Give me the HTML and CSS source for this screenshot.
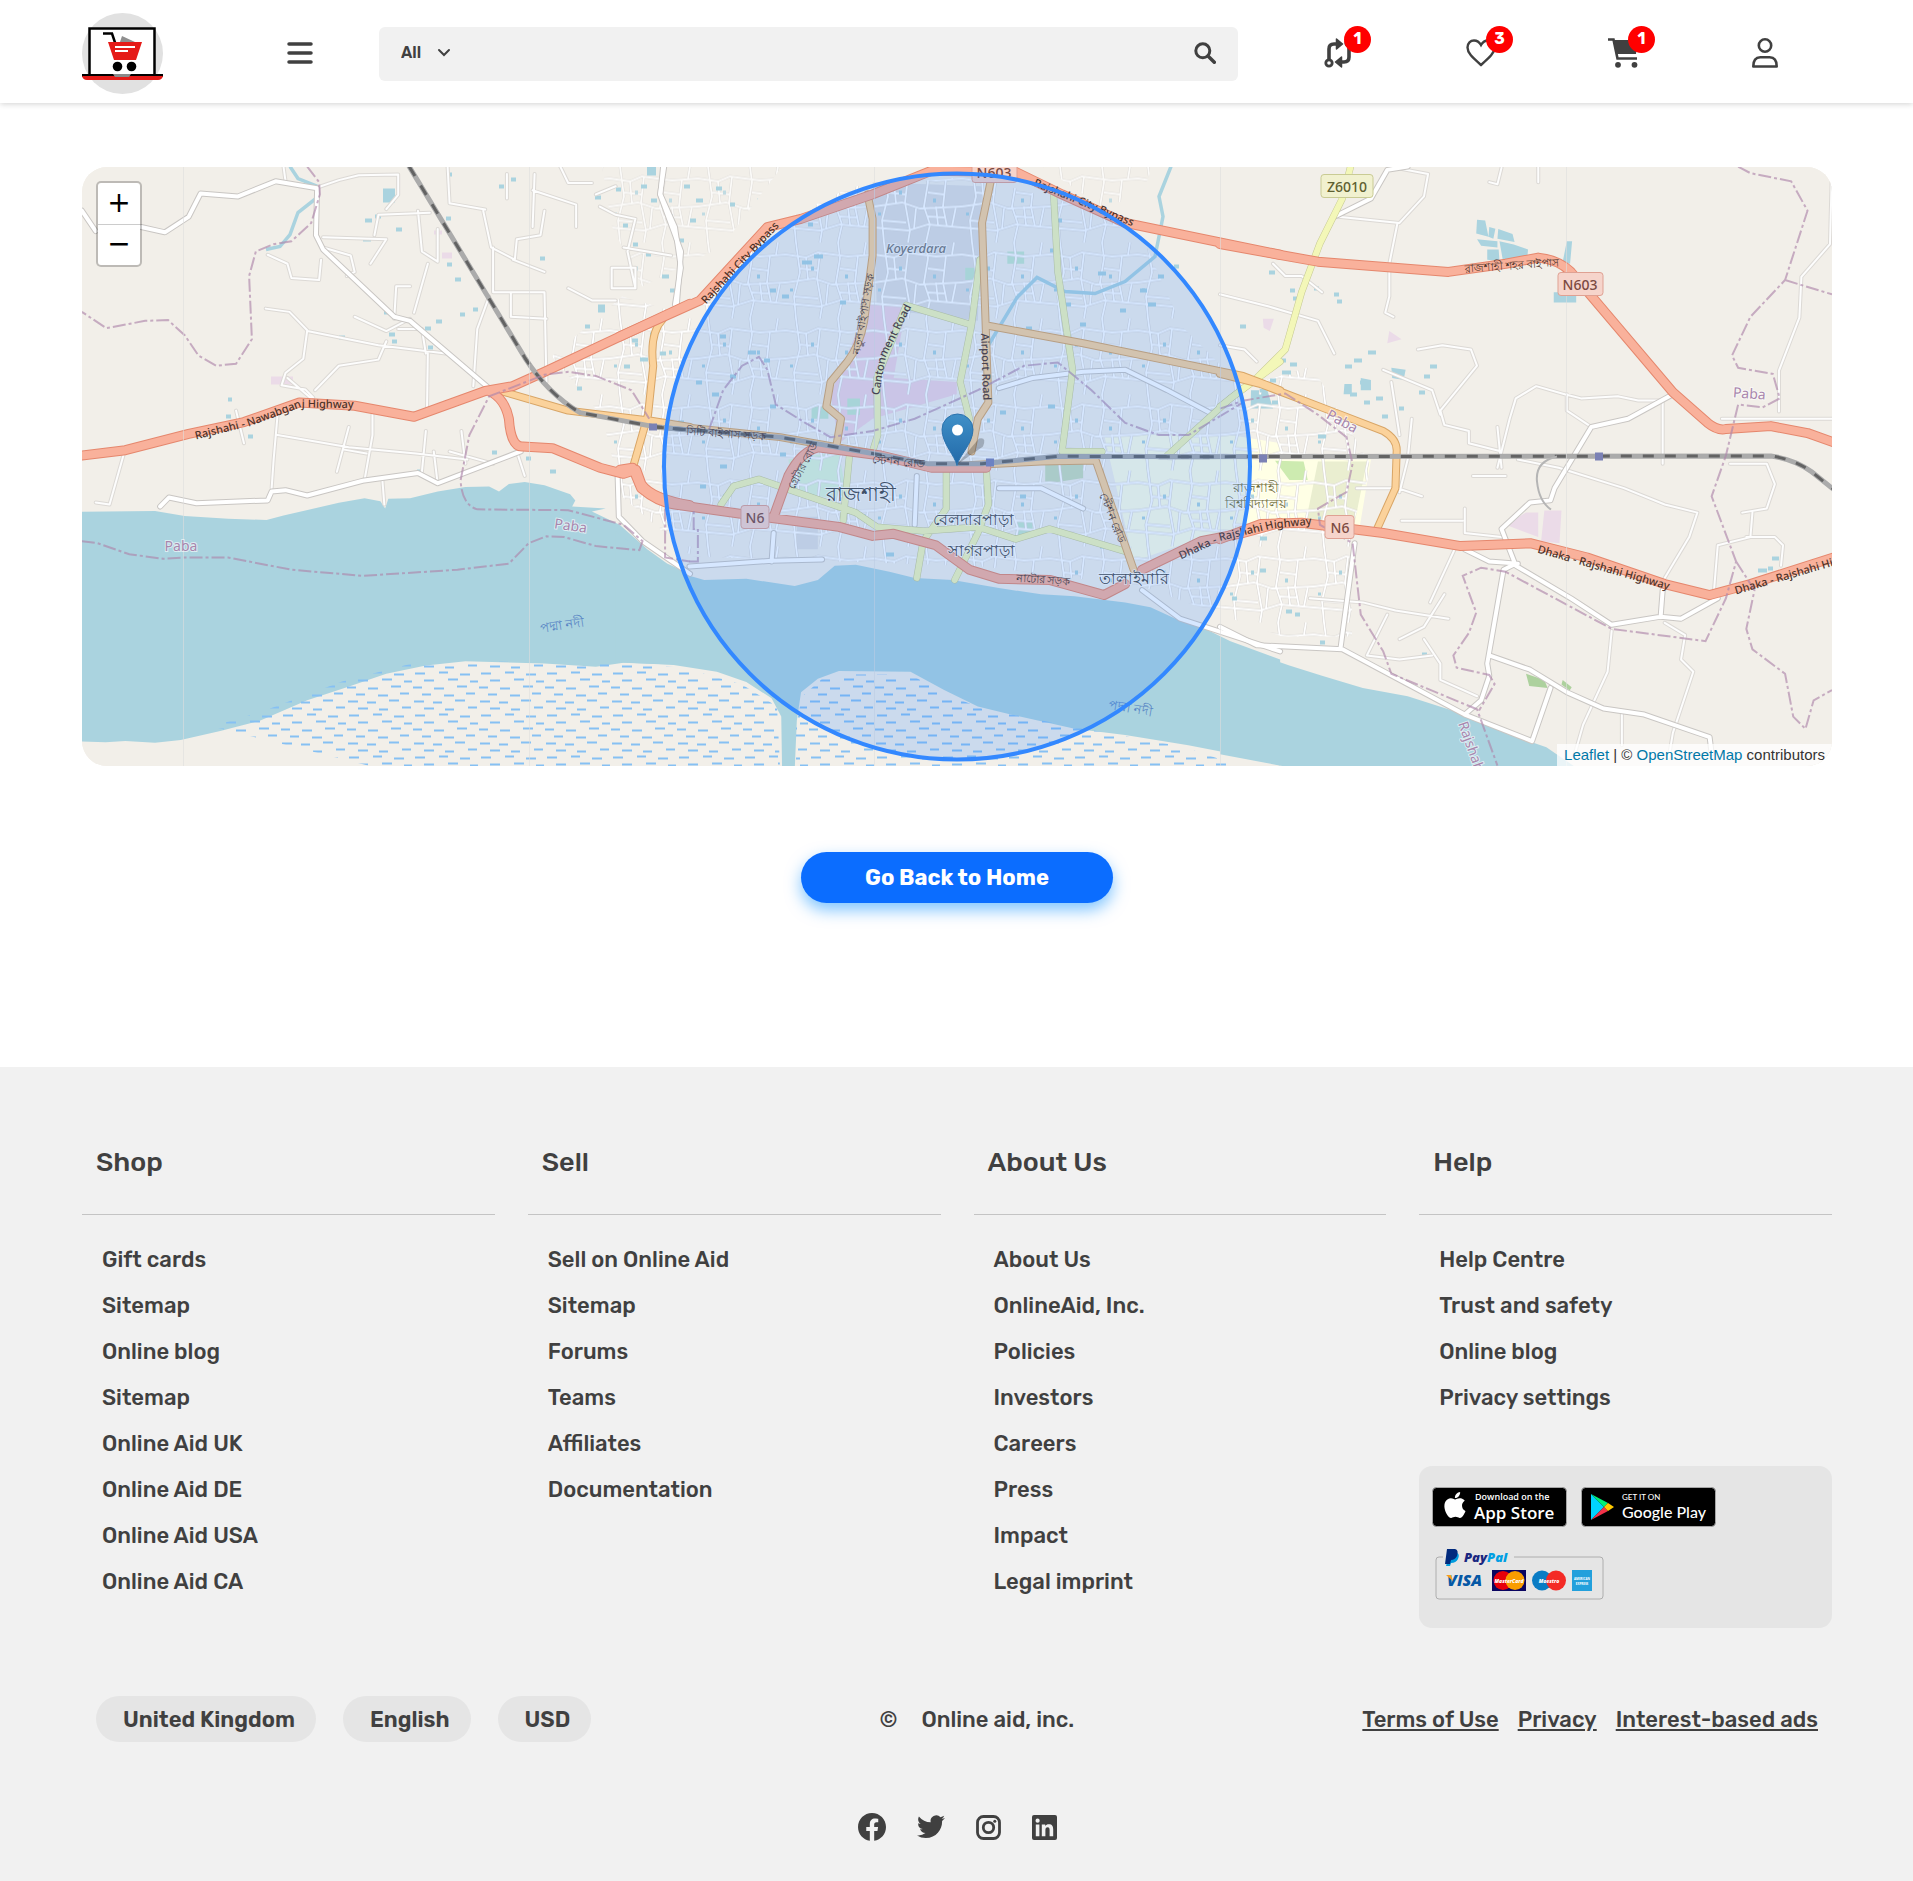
FILE: index.html
```html
<!DOCTYPE html>
<html lang="en">
<head>
<meta charset="utf-8">
<meta name="viewport" content="width=device-width, initial-scale=1">
<title>Online Aid</title>
<link rel="stylesheet" href="styles.css">
</head>
<body>
<header class="site-header">
  <a class="logo" href="#" aria-label="Online Aid">
    <svg viewBox="0 0 81 81" width="81" height="81">
      <circle cx="40.500" cy="40.500" r="40.500" fill="#e1e1e1"/>
      <rect x="7.500" y="15.500" width="65" height="47" fill="#fff" stroke="#000" stroke-width="2.500"/>
      <path d="M0 61h81v3H0z" fill="#000"/>
      <path d="M0 63h81q-1 4-5 4H5q-4 0-5-4z" fill="#e51b18"/>
      <path d="M31 61h18l-2 3H33z" fill="#8a8a8a"/>
      <path d="M38 29l2-6 13 6z" fill="#8f8f8f"/>
      <path d="M21 20.500h9l3 9" fill="none" stroke="#000" stroke-width="2.500"/>
      <path d="M26 29h34l-6 18H32z" fill="#e51b18"/>
      <path d="M33 34h20M33 38h13" stroke="#fff" stroke-width="2"/>
      <circle cx="35.500" cy="53.500" r="4.800"/><circle cx="49.500" cy="53.500" r="4.800"/>
    </svg>
  </a>
  <button class="menu-toggle" type="button" aria-label="Menu">
    <svg viewBox="0 0 26 24" width="26" height="24"><path d="M2 3h22M2 12h22M2 21h22" stroke="currentColor" stroke-width="3.500" stroke-linecap="round"/></svg>
  </button>
  <form class="search" role="search">
    <span class="search-scope">
      <select aria-label="Category"><option>All</option></select>
      <svg viewBox="0 0 14 10" width="14" height="10"><path d="M2 2l5 5 5-5" fill="none" stroke="currentColor" stroke-width="2" stroke-linecap="round"/></svg>
    </span>
    <input type="search" aria-label="Search products">
    <button type="submit" aria-label="Search">
      <svg viewBox="0 0 22 22" width="22" height="22"><circle cx="8.800" cy="8.800" r="7" fill="none" stroke="currentColor" stroke-width="3"/><path d="M14 14l6.300 6.300" stroke="currentColor" stroke-width="3.500" stroke-linecap="round"/></svg>
    </button>
  </form>
  <nav class="quick-links" aria-label="Account">
    <a href="#" aria-label="Compare"><span class="icon">
      <svg viewBox="0 0 30 30" width="30" height="30" fill="none" stroke="currentColor" stroke-width="3.600"><circle cx="5" cy="25" r="3.200" stroke-width="2.800"/><circle cx="25" cy="5" r="3.200" stroke-width="2.800"/><path d="M5 21V11q0-5 5-5h4M25 9v10q0 5-5 5h-4"/><path d="M12.500 1v10l6-5zM17.500 19v10l-6-5z" fill="currentColor" stroke-width="1.500" stroke-linejoin="round"/></svg>
      <b class="badge">1</b></span></a>
    <a href="#" aria-label="Wishlist"><span class="icon">
      <svg viewBox="0 0 30 30" width="30" height="30"><path d="M15 27C6 19 1.500 15 1.500 9.500 1.500 5 4.500 2.500 8 2.500c3 0 5.500 1.800 7 4.500 1.500-2.700 4-4.500 7-4.500 3.500 0 6.500 2.500 6.500 7C28.500 15 24 19 15 27z" fill="none" stroke="currentColor" stroke-width="2.400"/></svg>
      <b class="badge">3</b></span></a>
    <a href="#" aria-label="Cart"><span class="icon">
      <svg viewBox="0 0 30 30" width="30" height="30"><path d="M0 1.500h5.500L9.500 20.500H29" fill="none" stroke="currentColor" stroke-width="2.600"/><path d="M6 2h23.500l-1.500 14H9z" fill="currentColor"/><circle cx="10" cy="26.800" r="2.900" fill="currentColor"/><circle cx="26.500" cy="26.800" r="2.900" fill="currentColor"/></svg>
      <b class="badge">1</b></span></a>
    <a href="#" aria-label="Account"><span class="icon">
      <svg viewBox="0 0 30 30" width="30" height="30" fill="none" stroke="currentColor" stroke-width="2.600"><circle cx="15" cy="7.500" r="6.200"/><path d="M3.300 28.500c0-6 2.500-9.300 7-9.300h9.400c4.500 0 7 3.300 7 9.300z" stroke-linejoin="round"/></svg>
    </span></a>
  </nav>
</header>

<main>
  <section class="map" aria-label="Map">
    <svg class="map-canvas" viewBox="0 0 1750 600" preserveAspectRatio="xMidYMid slice">
      <defs>
        <pattern id="wetland" width="66" height="42" patternUnits="userSpaceOnUse">
          <path d="M3 3h10M27 2h9M48 4h10M12 10h10M36 9h10M58 11h8M1 17h9M22 18h10M45 16h10M10 24h9M32 25h10M54 23h9M2 31h10M21 32h9M43 30h10M12 38h10M33 39h9M56 37h9" stroke="#86c0f3" stroke-width="2"/>
        </pattern>
        <pattern id="streets" width="88" height="76" patternUnits="userSpaceOnUse">
          <path d="M0 12l20 3 12-5 30 4 26-2M0 40l28-4 18 6 42-2M0 61l34 3 20-6 34 3M10 0l4 30-6 24 2 22M34 10l-3 26 5 28-2 12M52 0l2 16-4 24 6 18-4 18M72 13l-3 27 4 20M20 15l2 22M42 42l-2 20M62 40l2 18M80 0l-2 12M82 40l-4 20M8 54l24 2M54 26l16 2M14 26l18 2M54 50l18 1" fill="none" stroke="#d6d3d0" stroke-width="2.800"/>
          <path d="M0 12l20 3 12-5 30 4 26-2M0 40l28-4 18 6 42-2M0 61l34 3 20-6 34 3M10 0l4 30-6 24 2 22M34 10l-3 26 5 28-2 12M52 0l2 16-4 24 6 18-4 18M72 13l-3 27 4 20M20 15l2 22M42 42l-2 20M62 40l2 18M80 0l-2 12M82 40l-4 20M8 54l24 2M54 26l16 2M14 26l18 2M54 50l18 1" fill="none" stroke="#fff" stroke-width="1.800"/>
          <path d="M25 24h3v4h-3zM59 32h3v4h-3zM4 46h3v3H4z" fill="#aad3df"/>
        </pattern>
        <linearGradient id="pin" x1="0" y1="0" x2="0" y2="1"><stop offset="0" stop-color="#3f90c8"/><stop offset="1" stop-color="#2269a8"/></linearGradient>
        <!-- Road and boundary geometry: west, centre and east survey sheets -->
        <g id="minor">
          <path d="M500 258l50 22 10 35 70 5 5-50M495 390l60 8 45 45-10 70-45 35-10 30 60 10 20 20M620 590l60-60 100-15 20-45M720 410l80 35 60-30M870 400l35-120M640 240l70 20 10 40-20 10M620 95l60-20 50-12 100-2 0 50-30 35M640 215l160 5-40 60M770 210l10-50 130-5M880 150l10 100 40 25 0-80M820 415l5-80 35 0M600 445l180 35 170 20M1020 580l10-140 30-80M830 440l60 0 10 60M955 42l5 90 90 15M1105 60l0 60M1045 150l20 90 60 30 5-50 60-10 10-60M1070 240l0 110 130 0 5 220M1175 60l-5 130M1170 100l110 35 0 55M1120 270l80 30M1115 350l0 60 90 5M1240 42l20 40 60 0M1330 110l50-20M1340 140l40 20 50 10-20 80 20 90M1370 290l60 0 0 50-60 0zM1400 240l120 20M1260 340l60 30 60 0M525 650l-10 110-5 70M525 700l180 30 170 15 130 15M705 680l-30 110M765 650l0 50-20 110M905 500l-2 130M900 690l-10 100M920 740l10 80M690 735l60 10M100 870l-35-5M100 870l35-120M420 640l20 80M550 560l60 50M1130 740l20 60M790 810l5 60M540 42l5 35M960 740l110 30M990 690l10 80"/>
        </g>
        <g id="minor-e">
          <path d="M290 165l150 15 60-65 10-55-80-15M435 180l-20 100 0 80-10 40 20 10M0 355l120 30 120 35 40 80M485 490l60-10 70 10 15 40-90 110 10 35 60 15 0 30 80 20M680 780l30-120 15-50 50-30 70 20 40 10 90-5 50 10 60 0M850 600l0 40 60 40M1085 620l0 150M730 760l100 20 160 50 100 40 80 20-20 60-60 100M515 1110l60-130M440 1200l60-30 50-80M600 880l0 60 90 10M620 800l80 0M690 780l-10-100M1500 42l-5 190-70 80-5 100-50 130 0 100M1230 660l270 0M1250 770l90 0 20 50-20 60-60 10M1290 950l70 0 20 20-5 50M1210 1090l10-120 80-20 5-60M960 1180l-10 100-60 130-20 70M1090 1160l50 30-10 60 30 30-50 150-10 60M985 1380l0 80M440 700l-20-130M400 540l120 50 20 60M220 1100l130 10 80 20 130 20M500 1200l40 60 0 40 90 40M660 80l20 5 10-40M780 80l0-38M335 830l100 0 60 20M445 910l150 0M130 280l30 30 40 0 50 40M0 480l60 10 30 30M470 660l-10 100-20 80M410 1140l-50 100 80 10 80-10"/>
        </g>
        <g id="local">
          <path d="M30 150l35 50M180 190l60 13 60-38 30-57 95 7 95-37 105 17-3 115 18 35 180 165 40 10 200 165M228 875l22-22 70 14 180-7 10-22 35-3 55 13 140-36 140-19 50 25 210-78M1500 42l-7 68 37 80 15 100-15 90M1385 800l3 100 60 60 120 80"/>
        </g>
        <g id="local-c">
          <path d="M105 42l-10 68 50 140-10 130M165 1022l195-14 120-3M900 585l80-25 120-15 100-5 100 50 110 60M705 800l-5 120M900 830l100 0 100 50M365 940l-5 70M1240 1080l90 70 238 80"/>
        </g>
        <g id="local-e">
          <path d="M280 165l90-45 40-70 50-8M1110 600l-110 60-90 20-90 150-10 30-50 5-70 65 35 90 135 80 100 65 120-20 50 5 90-50M600 980l60 30 70 5M725 1015l-30 15-40 230 5 30-20 60-40 35M660 1240l100 35 90 55 90 40 100 15 160 55 5 40M810 1320l-45 130-165-65-300-160-210-10-90-45M330 965l-35 260M1085 1080l-5 65"/>
        </g>
        <g id="west"><path d="M30 750L140 737L300 697L440 668L580 620L720 628L870 655L1050 592L1120 580L1200 545L1568 378M1060 592Q1100 610 1110 660Q1115 730 1145 728L1220 732L1340 780L1400 795L1432 785L1445 820Q1470 855 1568 872"/></g>
        <g id="centre"><path d="M0 458L190 370L350 190L430 170L600 110L740 52L940 55L1050 110L1200 180L1568 258M0 785L30 780L50 830Q90 865 130 870L300 895L520 925L600 947L650 942L750 970L830 1030L900 1052L1020 1055L1150 1092L1200 1065M1240 1030L1380 960L1480 940L1568 915M365 900L400 800Q430 740 470 730L620 750L740 780L870 780"/></g>
        <g id="east"><path d="M0 232L240 275L560 300L700 280L780 265Q830 270 860 300L1110 595L1195 670Q1220 690 1240 685L1350 678L1440 695L1510 720M0 955L100 918L200 915L400 940L590 972L760 965L900 1000L1090 1065L1200 1092L1300 1065L1510 998"/></g>
        <g id="rail-w"><path d="M858 42L1150 510Q1210 600 1290 645L1470 678L1568 688"/></g>
        <g id="rail-c"><path d="M78 680L380 705L600 745L730 770L860 770L1040 752L1400 753"/></g>
        <g id="rail-e"><path d="M-150 753L1350 751Q1410 760 1450 790L1510 838"/></g>
        <g id="sec-w"><path d="M1500 415Q1465 450 1475 530L1462 650L1425 775M1090 592L1260 640L1470 665L1568 680"/></g>
        <g id="sec-c"><path d="M588 110L600 170L600 260L580 420Q570 480 540 520L500 570L490 630L525 660L515 720M880 80L860 180L875 620L850 660L835 740M875 432L1100 475L1480 555L1568 590M100 675L380 705L600 745M800 775L1000 765L1130 762L1220 1030"/></g>
        <g id="sec-e"><path d="M0 550L100 575L270 640L400 690Q435 710 433 740L430 830L385 930"/></g>
        <g id="ter-c"><path d="M1568 520L1450 610L1300 750M1030 110L1040 300L1075 540L1050 740L1145 740M855 270L835 430L808 570L830 660M680 382L835 430M680 382L610 560L612 700L600 740M545 750L530 910M240 870L270 825L330 808L560 890L610 925L720 935L850 925L940 955L1020 930L1200 985M775 790L775 880L720 960L705 1050M870 780L875 870L850 940L795 1055"/></g>
        <g id="ter-e"><path d="M320 42L300 120L245 230L200 350L160 490L90 560L0 630"/></g>
        <path id="l1" d="M114 273L170 259L218 241L300 242"/>
        <path id="l2" d="M624 138L712 44"/>
        <path id="l3" d="M951 19L1080 72"/>
        <path id="l4" d="M797 229L804 190L840 120"/>
        <path id="l5" d="M899 167L902 260"/>
        <path id="l6" d="M1099 393L1140 374L1190 362L1250 356"/>
        <path id="l7" d="M1455 386L1610 430"/>
        <path id="l8" d="M1654 428L1800 385"/>
        <path id="l9" d="M1376 557L1402 630"/>
      </defs>
      <path fill="#f2efe9" d="M0 0h1750v600H0z"/>

      <!-- Land use -->
      <g transform="translate(538 -17) scale(.421 .408)">
        <path fill="#e0dfdf" d="M600 80l260 10-10 330-240-30zM420 900h50v80h-50z"/>
        <path fill="#f0d5e2" d="M590 380h90l-30 180 150 10v30l-200 60-80 60-20-120z"/>
        <path fill="#ffffe5" d="M1150 700h300l120 20v180l-240 70-110 40z"/>
        <path fill="#dff5d8" d="M400 760l120-20 20 120-130-20z"/>
        <path fill="#add19e" d="M1010 770h90v35l-90 15z" opacity=".6"/>
        <path fill="#c5e8cf" d="M540 610h30v40h-30zM920 250h40v30h-40zM940 910h40v35h-40zM455 630h40v30h-40zM820 290h25v30h-25z"/>
      </g>
      <g transform="translate(1138 -17) scale(.408)">
        <path fill="#ffffe5" d="M70 760h300l-30 180-110-30-160 20z"/>
        <path fill="#eaeed0" d="M240 765h120l-30 150h-120z"/>
        <path fill="#cdebb0" d="M135 763l70 2 10 45-45 0z"/>
        <path fill="#ebdbe8" d="M750 890h30v60l-80-30zM795 885h42l-5 80-45-5zM105 415h27l-10 30-15-8zM415 445l30 20-35 10z"/>
        <path fill="#add19e" d="M750 1285l45 15 8 20-45-5zM840 1300l22 18-5 8-20-15z"/>
        <path fill="#aad3df" d="M630 172l20 2 8 40-30-8zM660 190l15 4-5 25-12-5zM682 195l35 12 5 20-42-8zM630 220l50 5 0 15-40-4zM685 225l35 8 35 12-2 22-60 3zM655 245l28 0 2 28-30-3zM850 225h13l-5 55-18-5zM818 350h55v25h-55zM76 590l40 0 14 45-55 0zM420 535l35 5-5 25-28-5zM345 560l25 5v25h-25zM305 575h18v25h-20z"/>
      </g>
      <g fill="#ebdbe8"><path d="M189 210h22v8h-22zM360 86h10v6h-10zM352 64h8v4h-8z"/></g>

      <!-- Street fabric of the built-up area -->
      <path fill="url(#streets)" d="M470 190L540 130L610 150L690 60L770 20L890 10L1000 40L1060 70L1100 160L1160 220L1230 200L1290 300L1270 360L1270 470L1200 470L1060 420L900 400L760 395L610 390L540 330L520 250z"/>
      <path fill="url(#streets)" d="M520 0H700L640 80L560 120L530 60z" opacity=".7"/>
      <path fill="url(#streets)" d="M960 0H1070L1060 30L1020 40z" opacity=".7"/>

      <!-- River -->
      <g fill="#aad3df">
        <path transform="translate(-12 -17) scale(.3954 .408)" d="M0 888L215 886L290 898L400 905L497 908L540 897L680 866L745 855L785 862L797 880L805 856L860 855L930 838L1000 827L1060 826L1085 838L1110 820L1150 815L1200 823L1265 845L1278 860L1270 875L1355 880L1320 887L1390 920L1460 980L1510 1015L1568 1040V1265L1400 1258L1330 1268L1200 1260L1000 1254L900 1265L800 1285L700 1318L600 1350L480 1400L380 1425L280 1447L215 1454L140 1450L90 1453L0 1450z"/>
        <path transform="translate(538 -17) scale(.421 .408)" d="M-10 935L50 985L110 1020L165 1045L200 1055L300 1052L415 1070L470 1055L510 1020L560 1018L640 1035L700 1050L790 1055L900 1075L1000 1090L1080 1095L1200 1110L1260 1122L1330 1155L1380 1170L1450 1205L1568 1250V1510L1500 1490L1350 1460L1200 1435L1080 1420L950 1390L850 1365L770 1325L690 1280L520 1278L470 1297L430 1330L420 1400L415 1520H385L383 1390L360 1345L300 1305L230 1280L120 1262L-10 1257z"/>
        <path transform="translate(1138 -17) scale(.408)" d="M0 1205L170 1265L250 1290L350 1320L460 1340L600 1385L700 1430L800 1465L880 1520H200L0 1482z"/>
      </g>
      <path fill="url(#wetland)" d="M130 560L180 545L260 515L330 497L420 495L530 497L600 501L660 518L695 540L698 600H290zM714 600V560L720 530L745 508L828 508L865 528L900 542L990 560L1100 580L1160 600z"/>

      <!-- Streams and ponds -->
      <g fill="none" stroke="#aad3df" stroke-width="3.500">
        <path d="M208 0l8 12 20 8-2 12-18 14-8 22-10 12-14 3M1089 0l-12 30 4 20-8 40-30 25-30 12-30-2-28-14-20 20-30 50"/>
      </g>
      <path fill="#aad3df" d="M301 22h12v14h-12zM565 0h9v9h-9zM516 138h7v8h-7z"/>
      <g class="ponds">
        <path d="M285 54h3M295 50h2M316 63h2M283 73h4M367 98h1M375 113h2M304 146h1M345 162h2M356 155h2M309 168h2M348 181h1M380 148h1M393 143h1M259 171h2M312 175h1M366 52h1M368 8h0M419 20h1M431 13h1M460 92h1M515 31h2M536 23h1M561 20h2M543 59h1M571 34h2M553 78h1M566 88h1M582 110h3M590 124h1M148 233h0M146 250h1M168 270h1M337 305h1M446 292h1M470 305h2M412 286h1M505 160h1M552 174h2M560 193h4M570 168h2M580 187h2M497 222h1M544 200h2M586 50h3M604 20h2M616 34h3M610 54h2M636 22h2M650 38h1M598 74h2M722 96h6M734 90h5M690 124h2M702 130h3M728 58h1M640 170h2M668 186h4M684 194h2M650 210h2M632 228h3M616 216h2M598 256h2M690 240h2M760 136h2M960 20h3M974 54h4M970 84h2M1018 107h4M1060 124h3M1068 138h4M1040 144h2M984 138h3M1000 158h2M946 162h2M1078 110h2M1094 100h1M968 240h3M920 246h2M700 288h2M640 300h3M620 320h2M780 350h2M730 356h3M806 388h4M940 330h2M1020 380h2M1110 200h2M1160 160h2M1189 106h2M1213 132h2M1210 124h1M1234 122h1M1254 128h1M1257 135h1M1190 214h2M1202 206h5M1200 194h2M1210 198h3M1180 224h2M1192 236h2M1238 270h4M1288 186h4M1274 194h4M1265 200h3M1280 216h4M1270 228h3M1284 236h2M1296 232h3M1302 250h2M1350 200h3M1344 210h2M1339 226h2M1319 242h1M1180 372h3M1152 432h1M1206 445h2M1152 480h2M1180 404h2M1215 448h1M1342 488h1M1678 404h5M1692 392h3M1688 402h1M1240 476h1"/>
      </g>

      <!-- Minor and local roads -->
      <g class="road casing-minor"><use href="#minor" transform="translate(-12 -17) scale(.3954 .408)"/><use href="#minor-e" transform="translate(1138 -17) scale(.408)"/></g>
      <g class="road fill-minor"><use href="#minor" transform="translate(-12 -17) scale(.3954 .408)"/><use href="#minor-e" transform="translate(1138 -17) scale(.408)"/></g>
      <g class="road casing-local"><use href="#local" transform="translate(-12 -17) scale(.3954 .408)"/><use href="#local-c" transform="translate(538 -17) scale(.421 .408)"/><use href="#local-e" transform="translate(1138 -17) scale(.408)"/></g>
      <g class="road fill-local"><use href="#local" transform="translate(-12 -17) scale(.3954 .408)"/><use href="#local-c" transform="translate(538 -17) scale(.421 .408)"/><use href="#local-e" transform="translate(1138 -17) scale(.408)"/></g>

      <!-- Tertiary, secondary and trunk roads -->
      <g class="road casing-ter"><use href="#ter-c" transform="translate(538 -17) scale(.421 .408)"/><use href="#ter-e" transform="translate(1138 -17) scale(.408)"/></g>
      <g class="road fill-ter"><use href="#ter-c" transform="translate(538 -17) scale(.421 .408)"/><use href="#ter-e" transform="translate(1138 -17) scale(.408)"/></g>
      <g class="road casing-sec"><use href="#sec-w" transform="translate(-12 -17) scale(.3954 .408)"/><use href="#sec-c" transform="translate(538 -17) scale(.421 .408)"/><use href="#sec-e" transform="translate(1138 -17) scale(.408)"/></g>
      <g class="road fill-sec"><use href="#sec-w" transform="translate(-12 -17) scale(.3954 .408)"/><use href="#sec-c" transform="translate(538 -17) scale(.421 .408)"/><use href="#sec-e" transform="translate(1138 -17) scale(.408)"/></g>
      <g class="road casing-trunk"><use href="#west" transform="translate(-12 -17) scale(.3954 .408)"/><use href="#centre" transform="translate(538 -17) scale(.421 .408)"/><use href="#east" transform="translate(1138 -17) scale(.408)"/></g>
      <g class="road fill-trunk"><use href="#west" transform="translate(-12 -17) scale(.3954 .408)"/><use href="#centre" transform="translate(538 -17) scale(.421 .408)"/><use href="#east" transform="translate(1138 -17) scale(.408)"/></g>

      <!-- Railway -->
      <g class="road casing-rail"><use href="#rail-w" transform="translate(-12 -17) scale(.3954 .408)"/><use href="#rail-c" transform="translate(538 -17) scale(.421 .408)"/><use href="#rail-e" transform="translate(1138 -17) scale(.408)"/></g>
      <g class="road dash-rail"><use href="#rail-w" transform="translate(-12 -17) scale(.3954 .408)"/><use href="#rail-c" transform="translate(538 -17) scale(.421 .408)"/><use href="#rail-e" transform="translate(1138 -17) scale(.408)"/></g>
      <path fill="#7b81b5" d="M567 257h8v7h-8zM904 292h8v8h-8zM1177 288h8v8h-8zM1513 286h8v8h-8z"/>
      <path d="M1475 290q-22 5-20 25 2 20 14 28" fill="none" stroke="#b5b5b5" stroke-width="2"/>

      <!-- Administrative boundaries -->
      <g class="boundary">
        <path transform="translate(-12 -17) scale(.3954 .408)" d="M600 42L630 80L632 110L610 180L560 225L515 232L470 250L453 310L460 465L420 525L370 530L325 505L290 455L248 418L190 420L92 438L30 398M30 960L70 965L150 992L235 1003L290 1000L400 1000L560 1030L740 1045L980 1030L1110 1015L1160 965L1205 948L1250 950L1330 972L1440 982L1448 960L1400 920L1260 884L1030 882Q990 870 988 810L1010 700L1060 605L1200 552L1260 545L1330 555L1420 590L1465 660M1505 880V1000L1568 1010"/>
        <path transform="translate(538 -17) scale(.421 .408)" d="M212 685L245 590L290 530L330 508L350 540L370 625L440 670L500 705L600 690L700 660L850 590L960 530L1040 522L1120 590L1200 670L1280 700L1350 700L1480 620M165 1010H185V930H175V880"/>
        <path transform="translate(1138 -17) scale(.408)" d="M0 635L60 615L160 598L240 650L310 705L325 770L310 840L240 880L245 920L325 965L345 1140L400 1230L420 1285L630 1372L680 1510M1270 42L1300 58L1400 78L1440 150L1385 320L1300 410L1255 505L1270 535L1355 550L1372 610L1330 632L1270 625L1240 750L1205 850L1265 1010L1240 1100L1190 1205L960 1175L700 1035L640 1025L595 1045L628 1135L610 1185L572 1240L580 1270L660 1288L673 1310L635 1375M1385 320L1500 355M1265 1010L1310 1080L1290 1175L1305 1225L1385 1285L1405 1390L1435 1420L1455 1350L1500 1325"/>
      </g>
      <path d="M101.500 0v600M447.500 0v600M792.500 0v600M1138.500 0v600M1484.500 0v600" stroke="#ddd" stroke-opacity=".6"/>

      <!-- Road shields -->
      <g class="shield"><rect x="890" y="-8" width="45" height="24" rx="3"/><rect x="1476" y="106" width="45" height="23" rx="3"/><rect x="659" y="339" width="28" height="23" rx="3"/><rect x="1243" y="349" width="29" height="23" rx="3"/></g>
      <rect x="1239" y="8" width="52" height="23" rx="3" fill="#f1f1cf" stroke="#c9cb94"/>
      <g class="shield-text"><text x="912" y="11">N603</text><text x="1498" y="123">N603</text><text x="673" y="356">N6</text><text x="1258" y="366">N6</text><text x="1265" y="25" fill="#5e6030">Z6010</text></g>

      <!-- Names -->
      <g class="road-name">
        <text><textPath href="#l1">Rajshahi - Nawabganj Highway</textPath></text>
        <text><textPath href="#l2">Rajshahi City Bypass</textPath></text>
        <text><textPath href="#l3">Rajshahi City Bypass</textPath></text>
        <text><textPath href="#l4">Cantonment Road</textPath></text>
        <text><textPath href="#l5">Airport Road</textPath></text>
        <text><textPath href="#l6">Dhaka - Rajshahi Highway</textPath></text>
        <text><textPath href="#l7">Dhaka - Rajshahi Highway</textPath></text>
        <text><textPath href="#l8">Dhaka - Rajshahi Highway</textPath></text>
        <g text-anchor="middle">
          <text transform="translate(644 271) rotate(4)">সিটি বাইপাস সড়ক</text>
          <text transform="translate(816 299) rotate(5)">স্টেশন রোড</text>
          <text transform="translate(724 301) rotate(-62)">গ্রেটার রোড</text>
          <text transform="translate(1027 353) rotate(68)">স্টেশন রোড</text>
          <text transform="translate(961 417) rotate(4)">নাটোর সড়ক</text>
          <text transform="translate(1430 103) rotate(-4)">রাজশাহী শহর বাইপাস</text>
          <text transform="translate(785 148) rotate(-80)">নতুন বাইপাস সড়ক</text>
        </g>
      </g>
      <g class="place">
        <text x="834" y="86" class="suburb">Koyerdara</text>
        <text x="779" y="334" class="city">রাজশাহী</text>
        <text x="891" y="358">বেলদারপাড়া</text><text x="899" y="389">সাগরপাড়া</text><text x="1052" y="417">তালাইমারি</text>
        <text x="1174" y="325" class="campus">রাজশাহী</text><text x="1174" y="341" class="campus">বিশ্ববিদ্যালয়</text>
      </g>
      <g class="district"><text x="99" y="384">Paba</text><text transform="translate(488 364) rotate(8)">Paba</text><text transform="translate(1667 232) rotate(4)">Paba</text><text transform="translate(1258 259) rotate(28)">Paba</text></g>
      <text class="district-path"><textPath href="#l9">Rajshahi</textPath></text>
      <g class="river-name"><text transform="translate(481 463) rotate(-8)">পদ্মা নদী</text><text transform="translate(1048 546) rotate(10)">পদ্মা নদী</text></g>

      <!-- Search radius and marker -->
      <circle cx="875" cy="300" r="293" fill="#3388ff" fill-opacity=".2" stroke="#3388ff" stroke-width="4"/>
      <path d="M875 298l22-26q8-2 4 8z" fill="#000" opacity=".22"/>
      <path d="M875 299c-2-10-15-22-15-36a15.500 15.500 0 0 1 31 0c0 14-14 26-16 36z" fill="url(#pin)" stroke="#2b72ad"/>
      <circle cx="875.500" cy="263.500" r="5.500" fill="#fff"/>
    </svg>
    <div class="zoom-control"><button type="button" aria-label="Zoom in">+</button><button type="button" aria-label="Zoom out">−</button></div>
    <p class="attribution"><a href="#">Leaflet</a> | © <a href="#">OpenStreetMap</a> contributors</p>
  </section>
  <button class="home-button" type="button">Go Back to Home</button>
</main>

<footer class="site-footer">
  <div class="footer-columns">
    <section><h2>Shop</h2><ul><li><a href="#">Gift cards</a></li><li><a href="#">Sitemap</a></li><li><a href="#">Online blog</a></li><li><a href="#">Sitemap</a></li><li><a href="#">Online Aid UK</a></li><li><a href="#">Online Aid DE</a></li><li><a href="#">Online Aid USA</a></li><li><a href="#">Online Aid CA</a></li></ul></section>
    <section><h2>Sell</h2><ul><li><a href="#">Sell on Online Aid</a></li><li><a href="#">Sitemap</a></li><li><a href="#">Forums</a></li><li><a href="#">Teams</a></li><li><a href="#">Affiliates</a></li><li><a href="#">Documentation</a></li></ul></section>
    <section><h2>About Us</h2><ul><li><a href="#">About Us</a></li><li><a href="#">OnlineAid, Inc.</a></li><li><a href="#">Policies</a></li><li><a href="#">Investors</a></li><li><a href="#">Careers</a></li><li><a href="#">Press</a></li><li><a href="#">Impact</a></li><li><a href="#">Legal imprint</a></li></ul></section>
    <section><h2>Help</h2><ul><li><a href="#">Help Centre</a></li><li><a href="#">Trust and safety</a></li><li><a href="#">Online blog</a></li><li><a href="#">Privacy settings</a></li></ul>
      <div class="apps">
        <div class="stores">
          <a href="#" aria-label="Download on the App Store"><svg viewBox="0 0 135 40" width="135" height="40"><rect x=".5" y=".5" width="134" height="39" rx="4" stroke="#a6a6a6"/><path transform="translate(10 5) scale(1.080)" fill="#fff" d="M12.152 6.896c-.948 0-2.415-1.078-3.960-1.040-2.040.027-3.910 1.183-4.961 3.014-2.117 3.675-.546 9.103 1.519 12.090 1.013 1.454 2.208 3.090 3.792 3.039 1.520-.065 2.090-.987 3.935-.987 1.831 0 2.350.987 3.960.948 1.637-.026 2.676-1.480 3.676-2.948 1.156-1.688 1.636-3.325 1.662-3.415-.039-.013-3.182-1.221-3.220-4.857-.026-3.040 2.480-4.494 2.597-4.559-1.429-2.090-3.623-2.324-4.390-2.376-2-.156-3.675 1.090-4.610 1.090zM15.530 3.830c.843-1.012 1.400-2.427 1.245-3.830-1.207.052-2.662.805-3.532 1.818-.780.896-1.454 2.338-1.273 3.714 1.338.104 2.715-.688 3.559-1.701"/><text x="43" y="13" class="store-small">Download on the</text><text x="42" y="32" class="store-name">App Store</text></svg></a>
          <a href="#" aria-label="Get it on Google Play"><svg viewBox="0 0 135 40" width="135" height="40"><rect x=".5" y=".5" width="134" height="39" rx="4" stroke="#a6a6a6"/><path d="M10 7v26l13-13z" fill="#00d4ff"/><path d="M10 7l13 13 4-4z" fill="#00f076"/><path d="M10 33l13-13 4 4z" fill="#f43249"/><path d="M23 20l4-4 6 4-6 4z" fill="#ffc900"/><text x="41" y="13" class="store-get">GET IT ON</text><text x="41" y="31" class="store-play">Google Play</text></svg></a>
        </div>
        <svg class="payments" viewBox="0 0 170 52" width="170" height="52" role="img" aria-label="PayPal, Visa, MasterCard, Maestro, American Express">
          <path d="M8 9H4Q1 9 1 12v36q0 3 3 3h161q3 0 3-3V12q0-3-3-3H79" fill="none" stroke="#aeaeae"/>
          <path d="M15 5h7q3 1 1 6-2 4-7 4l-1 3h-4z" fill="#009cde"/><path d="M12 1h8q4 1 2 7-2 4-6 4l-1 4h-5z" fill="#012a7d"/>
          <text x="29" y="14" class="paypal"><tspan fill="#1a2780">Pay</tspan><tspan fill="#009fe3">Pal</tspan></text>
          <text x="12" y="38" class="visa">VISA</text><path d="M11 27h5l2 6z" fill="#f79f1a"/>
          <path d="M57 22h34v21H57z" fill="#0a0560"/><circle cx="68" cy="32.500" r="9.500" fill="#e7000b"/><circle cx="80" cy="32.500" r="9.500" fill="#f99d00"/><text x="74" y="35" class="card">MasterCard</text>
          <circle cx="107" cy="32.500" r="10" fill="#0a7cc4"/><circle cx="121" cy="32.500" r="10" fill="#f42a25"/><text x="114" y="35" class="card">Maestro</text>
          <path d="M137 22h20v21h-20z" fill="#22a0dc"/><text x="147" y="32" class="amex">AMERICAN</text><text x="147" y="37" class="amex">EXPRESS</text>
        </svg>
      </div>
    </section>
  </div>
  <div class="footer-bar">
    <div class="preferences"><button type="button">United Kingdom</button><button type="button">English</button><button type="button">USD</button></div>
    <p class="copyright"><span>©</span><span>Online aid, inc.</span></p>
    <nav class="legal" aria-label="Legal"><a href="#">Terms of Use</a><a href="#">Privacy</a><a href="#">Interest-based ads</a></nav>
  </div>
  <nav class="social" aria-label="Social media">
    <a href="#" aria-label="Facebook"><svg viewBox="2 2 20 20" width="28" height="28" fill="currentColor"><path d="M12 2C6.477 2 2 6.477 2 12c0 4.991 3.657 9.128 8.438 9.879V14.890h-2.540V12h2.540V9.797c0-2.506 1.492-3.890 3.777-3.890 1.094 0 2.238.195 2.238.195v2.460h-1.260c-1.243 0-1.630.771-1.630 1.562V12h2.773l-.443 2.890h-2.330v6.989C18.343 21.129 22 16.990 22 12c0-5.523-4.477-10-10-10z"/></svg></a>
    <a href="#" aria-label="Twitter"><svg viewBox="1.800 2 20.400 20.400" width="28" height="28" fill="currentColor"><path d="M22.162 5.656a8.384 8.384 0 0 1-2.402.658A4.196 4.196 0 0 0 21.600 4c-.820.488-1.719.830-2.656 1.015a4.182 4.182 0 0 0-7.126 3.814 11.874 11.874 0 0 1-8.620-4.370 4.168 4.168 0 0 0-.566 2.103c0 1.450.738 2.731 1.860 3.481a4.168 4.168 0 0 1-1.894-.523v.052a4.185 4.185 0 0 0 3.355 4.101 4.210 4.210 0 0 1-1.890.072A4.185 4.185 0 0 0 7.970 16.650a8.394 8.394 0 0 1-6.191 1.732 11.830 11.830 0 0 0 6.410 1.880c7.693 0 11.900-6.373 11.900-11.900 0-.180-.005-.362-.013-.540a8.496 8.496 0 0 0 2.087-2.165z"/></svg></a>
    <a href="#" aria-label="Instagram"><svg viewBox="0 0 25 25" width="25" height="25" fill="none" stroke="currentColor" stroke-width="2.800"><rect x="1.500" y="1.500" width="22" height="22" rx="6"/><circle cx="12.500" cy="12.500" r="5.200"/><circle cx="18.800" cy="6.200" r="1.500" fill="currentColor" stroke="none"/></svg></a>
    <a href="#" aria-label="LinkedIn"><svg viewBox="0 0 25 25" width="25" height="25"><rect width="25" height="25" rx="2" fill="currentColor"/><path d="M3.800 9.500h3.600v11.700H3.800zM9.800 9.500h3.400v1.600c.8-1.300 2-1.900 3.600-1.900 3.400 0 4.400 2 4.400 5.300v6.700h-3.600v-6c0-1.800-.4-2.900-1.900-2.900-1.700 0-2.300 1.200-2.300 3v5.900H9.800z" fill="#f1f1f1"/><circle cx="5.600" cy="5.700" r="2.100" fill="#f1f1f1"/></svg></a>
  </nav>
</footer>
</body>
</html>
```

FILE: styles.css
```css
* { box-sizing: border-box; }

body {
  margin: 0;
  background: #fff;
  color: #404040;
  font-family: Rubik, Inter, "Noto Sans", sans-serif;
  font-size: 22px;
  font-weight: 500;
}

a { color: inherit; text-decoration: none; }
button, input, select { font: inherit; color: inherit; border: 0; background: none; padding: 0; margin: 0; }
button { cursor: pointer; }
svg { display: block; }

/* Header */
.site-header {
  display: flex;
  align-items: center;
  height: 103px;
  padding: 4px 77px 0 82px;
  box-shadow: 0 1px 6px rgba(0, 0, 0, .18);
}
.logo { flex: none; }
.menu-toggle { flex: none; margin-left: 124px; padding-bottom: 2px; }
.search {
  flex: 1;
  display: flex;
  align-items: center;
  height: 54px;
  margin-left: 66px;
  padding: 0 22px 2px;
  border-radius: 6px;
  background: #f1f1f1;
}
.search-scope { display: flex; align-items: center; gap: 15px; font-size: 16px; }
.search-scope select { appearance: none; font-weight: 600; }
.search input { flex: 1; min-width: 0; height: 100%; margin: 0 16px; outline: 0; appearance: none; }
.quick-links { display: grid; grid-template-columns: repeat(4, 1fr); width: 33%; max-width: 568px; margin-left: 30px; padding-bottom: 2px; }
.quick-links a { display: flex; justify-content: center; }
.icon { position: relative; }
.badge {
  position: absolute;
  top: -12px;
  left: 20px;
  width: 27px;
  height: 27px;
  border-radius: 50%;
  background: #f00;
  color: #fff;
  font-size: 16px;
  font-weight: 700;
  line-height: 25px;
  text-align: center;
}

/* Map */
main { display: flex; flex-direction: column; padding: 64px 81px 164px 82px; }
.map { position: relative; height: 599px; border-radius: 25px; overflow: hidden; background: #f2efe9; }
.map-canvas { width: 100%; height: 100%; font-family: "Noto Sans", sans-serif; font-weight: 400; }
.road { fill: none; stroke-linecap: round; stroke-linejoin: round; }
.map-canvas path { vector-effect: non-scaling-stroke; }
.casing-minor { stroke: #dcd9d5; stroke-width: 4px; }
.fill-minor { stroke: #fdfdfd; stroke-width: 2px; }
.casing-local { stroke: #c9c6c3; stroke-width: 6px; }
.fill-local { stroke: #fff; stroke-width: 4px; }
.casing-ter { stroke: #c5c893; stroke-width: 7px; }
.fill-ter { stroke: #f3f7b8; stroke-width: 6px; }
.casing-sec { stroke: #d8a566; stroke-width: 8px; }
.fill-sec { stroke: #fbd29b; stroke-width: 6px; }
.casing-trunk { stroke: #e5876d; stroke-width: 10px; }
.fill-trunk { stroke: #f9b19b; stroke-width: 8px; }
.casing-rail { stroke: #ababab; stroke-width: 5px; }
.dash-rail { stroke: #636363; stroke-width: 3px; stroke-linecap: butt; stroke-dasharray: 11 11; }
.ponds { fill: none; stroke: #aad3df; stroke-width: 4px; stroke-linecap: square; }
.boundary { fill: none; stroke: #ad85aa; stroke-opacity: .65; stroke-width: 2px; stroke-dasharray: 13 3 3 3; }
.shield rect { fill: #f6d4cb; stroke: #dfa193; }
.shield-text { fill: #7b4a42; font-size: 14px; font-weight: 500; text-anchor: middle; }
.road-name { fill: #4c3128; font-size: 11px; font-weight: 500; }
.place { fill: #444; font-size: 16px; font-weight: 500; text-anchor: middle; paint-order: stroke; stroke: #fff; stroke-opacity: .6; stroke-width: 2px; }
.place .suburb { fill: #777; font-size: 13px; font-style: italic; }
.place .city { font-size: 20px; }
.place .campus { fill: #6e6b35; font-size: 13px; }
.district, .district-path { fill: #a886ad; font-size: 14px; paint-order: stroke; stroke: #fff; stroke-opacity: .6; stroke-width: 2px; }
.district { text-anchor: middle; }
.river-name { fill: #5784c4; font-size: 13px; font-weight: 500; text-anchor: middle; }

.zoom-control {
  position: absolute;
  top: 14px;
  left: 14px;
  width: 46px;
  border: 2px solid rgba(0, 0, 0, .22);
  border-radius: 5px;
  background: #fff;
  background-clip: padding-box;
}
.zoom-control button { display: block; width: 100%; height: 41px; padding-bottom: 2px; color: #000; font: 500 28px/36px "DejaVu Sans", sans-serif; }
.zoom-control button + button { border-top: 1px solid #ccc; }
.attribution {
  position: absolute;
  right: 0;
  bottom: 0;
  margin: 0;
  padding: 0 7px;
  background: rgba(255, 255, 255, .75);
  color: #333;
  font: 15px/22px "Liberation Sans", sans-serif;
}
.attribution a { color: #0078a8; }

.home-button {
  align-self: center;
  width: 312px;
  height: 51px;
  margin-top: 86px;
  border-radius: 26px;
  background: #0b6dff;
  box-shadow: 0 7px 16px rgba(0, 140, 255, .5);
  color: #fff;
  font-weight: 700;
}

/* Footer */
.site-footer { padding: 56px 81px 40px 82px; background: #f1f1f1; }
.footer-columns { display: grid; grid-template-columns: repeat(4, 1fr); gap: 33px; }
.footer-columns h2 { margin: 0 0 22px; padding: 10px 14px 22px; border-bottom: 1px solid #c4c4c4; font-size: 27px; font-weight: 500; line-height: 59px; }
.footer-columns ul { margin: 0; padding: 0 20px; list-style: none; }
.footer-columns li { line-height: 46px; }
.apps { margin-top: 45px; padding: 21px 13px 28px; border-radius: 13px; background: #e5e5e5; }
.stores { display: flex; flex-wrap: wrap; gap: 14px; }
.payments { margin: 21px 0 0 3px; }
.store-small, .store-name, .store-get, .store-play { fill: #fff; font-family: "Open Sans", sans-serif; }
.store-small { font-size: 9px; font-weight: 600; }
.store-name { font-size: 17px; font-weight: 600; }
.store-get { font-family: Lato, sans-serif; font-size: 8px; }
.store-play { font-family: Lato, sans-serif; font-size: 16px; }
.paypal { font: italic 800 13px "Open Sans", sans-serif; }
.visa { font: italic 800 16px "Open Sans", sans-serif; fill: #0558a5; }
.card { font: italic 800 5px "Open Sans", sans-serif; fill: #fff; text-anchor: middle; }
.amex { font: 700 3px "Open Sans", sans-serif; fill: #fff; text-anchor: middle; }

.footer-bar { display: flex; align-items: center; justify-content: space-between; margin-top: 68px; padding: 0 14px; }
.preferences { display: flex; gap: 27px; }
.preferences button { height: 46px; padding: 0 21px 0 27px; border-radius: 23px; background: #e5e5e5; font-weight: 600; }
.copyright { display: flex; gap: 24px; margin: 0; }
.legal { display: flex; gap: 19px; }
.legal a { text-decoration: underline; text-underline-offset: 2px; }
.social { display: flex; align-items: center; justify-content: center; gap: 31px; margin-top: 71px; }
```
